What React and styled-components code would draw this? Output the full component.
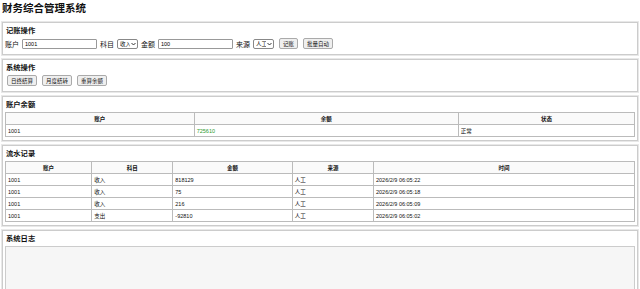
import React from "react";
import styled, { createGlobalStyle } from "styled-components";

const Global = createGlobalStyle`
  html, body { margin: 0; padding: 0; background: #fff; }
  body {
    padding: 2px;
    font-family: "Liberation Sans", "Noto Sans CJK SC", sans-serif;
    color: #111;
  }
`;

const Title = styled.h1`
  font-size: 10.5px;
  font-weight: bold;
  margin: 0 0 7px 0;
  line-height: 13px;
`;

const Section = styled.section`
  border: 1px solid #ccc;
  box-shadow: 0 0 0 1px #e8e8e8;
  padding: 3px 2px 3px 2px;
  margin-bottom: 4px;
`;

const Heading = styled.h3`
  font-size: 7.3px;
  font-weight: bold;
  margin: 0 0 2px 1px;
  line-height: 10px;
`;

const Row = styled.div`
  display: flex;
  align-items: center;
  gap: 3px;
  margin-bottom: 2px;
  font-size: 7px;
  height: 11px;
`;

const Label = styled.span`
  font-size: 7px;
`;

const Input = styled.input`
  width: 75px;
  height: 10px;
  box-sizing: border-box;
  font-size: 5.5px;
  padding: 0 2px;
  border: 1px solid #999;
  border-radius: 1px;
  font-family: inherit;
  outline: none;
`;

const SelectWrap = styled.span`
  position: relative;
  display: inline-flex;
  align-items: center;
`;

const Select = styled.select`
  appearance: none;
  width: 21px;
  height: 10px;
  box-sizing: border-box;
  font-size: 5.5px;
  padding: 0 7px 0 2px;
  border: 1px solid #888;
  border-radius: 2px;
  font-family: inherit;
  background: #fff;
  color: #111;
`;

const Chevron = styled.svg`
  position: absolute;
  right: 2px;
  top: 3px;
  width: 5px;
  height: 4px;
  pointer-events: none;
`;

const Button = styled.button`
  height: 11px;
  font-size: 5.5px;
  padding: 0 3px;
  border: 1px solid #aaa;
  border-radius: 2px;
  background: #efefef;
  font-family: inherit;
  color: #111;
  margin-left: ${(p) => (p.$gap ? p.$gap : 0)}px;
`;

const Table = styled.table`
  width: 100%;
  border-collapse: collapse;
  font-size: 5.5px;
  margin-top: 1px;
`;

const Th = styled.th`
  border: 1px solid #bbb;
  font-weight: bold;
  height: 11px;
  padding: 0 2px;
  text-align: center;
  background: #fafafa;
  width: ${(p) => p.$w || "auto"};
`;

const Td = styled.td`
  border: 1px solid #bbb;
  height: 11px;
  padding: 0 2px;
  color: ${(p) => p.$color || "#111"};
`;

const LogBox = styled.div`
  border: 1px solid #ccc;
  background: #f6f6f6;
  height: 60px;
  margin-top: 1px;
`;

const tx = [
  ["1001", "收入", "818129", "人工", "2026/2/9 06:05:22"],
  ["1001", "收入", "75", "人工", "2026/2/9 06:05:18"],
  ["1001", "收入", "216", "人工", "2026/2/9 06:05:09"],
  ["1001", "支出", "-92810", "人工", "2026/2/9 06:05:02"],
];

function Dropdown({ value, options }) {
  return (
    <SelectWrap>
      <Select defaultValue={value}>
        {options.map((o) => (
          <option key={o}>{o}</option>
        ))}
      </Select>
      <Chevron viewBox="0 0 5 4">
        <path d="M0.5 1 L2.5 3 L4.5 1" fill="none" stroke="#222" strokeWidth="0.9" />
      </Chevron>
    </SelectWrap>
  );
}

export default function App() {
  return (
    <>
      <Global />
      <Title>财务综合管理系统</Title>
      <Section>
        <Heading>记账操作</Heading>
        <Row>
          <Label>账户</Label>
          <Input defaultValue="1001" />
          <Label>科目</Label>
          <Dropdown value="收入" options={["收入", "支出"]} />
          <Label>金额</Label>
          <Input defaultValue="100" />
          <Label>来源</Label>
          <Dropdown value="人工" options={["人工", "自动"]} />
          <Button $gap={2}>记账</Button>
          <Button $gap={2}>批量自动</Button>
        </Row>
      </Section>
      <Section>
        <Heading>系统操作</Heading>
        <Row>
          <Button $gap={2}>日终结算</Button>
          <Button $gap={2}>月度结转</Button>
          <Button $gap={2}>重算余额</Button>
        </Row>
      </Section>
      <Section>
        <Heading>账户余额</Heading>
        <Table>
          <thead>
            <tr>
              <Th $w="30%">账户</Th>
              <Th $w="42%">余额</Th>
              <Th>状态</Th>
            </tr>
          </thead>
          <tbody>
            <tr>
              <Td>1001</Td>
              <Td $color="#2e9a2e">725610</Td>
              <Td>正常</Td>
            </tr>
          </tbody>
        </Table>
      </Section>
      <Section>
        <Heading>流水记录</Heading>
        <Table>
          <thead>
            <tr>
              <Th $w="13.7%">账户</Th>
              <Th $w="12.9%">科目</Th>
              <Th $w="19%">金额</Th>
              <Th $w="12.9%">来源</Th>
              <Th>时间</Th>
            </tr>
          </thead>
          <tbody>
            {tx.map((r, i) => (
              <tr key={i}>
                {r.map((c, j) => (
                  <Td key={j}>{c}</Td>
                ))}
              </tr>
            ))}
          </tbody>
        </Table>
      </Section>
      <Section>
        <Heading>系统日志</Heading>
        <LogBox />
      </Section>
    </>
  );
}
